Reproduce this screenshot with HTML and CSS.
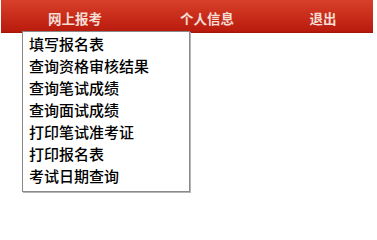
FILE: index.html
```html
<!DOCTYPE html>
<html lang="zh-CN">
<head>
<meta charset="utf-8">
<link rel="stylesheet" href="styles.css">
</head>
<body>
<div class="page">
  <nav class="navbar">
    <div class="nav-item nav-first">网上报考
      <ul class="dropdown">
        <li>填写报名表</li>
        <li>查询资格审核结果</li>
        <li>查询笔试成绩</li>
        <li>查询面试成绩</li>
        <li>打印笔试准考证</li>
        <li>打印报名表</li>
        <li>考试日期查询</li>
      </ul>
    </div>
    <div class="nav-item nav-second">个人信息</div>
    <div class="nav-item nav-third">退出</div>
  </nav>
</div>
</body>
</html>
```
FILE: styles.css
```css
html, body {
  margin: 0;
  padding: 0;
  background: #ffffff;
}
.page {
  width: 377px;
  height: 220px;
  position: relative;
  font-family: "Noto Sans CJK SC", "Noto Sans", sans-serif;
}
.navbar {
  display: flex;
  margin-left: 1px;
  width: 372px;
  height: 33px;
  padding-left: 8px;
  box-sizing: border-box;
  background: linear-gradient(to bottom, #d8402a 0%, #c82c1a 50%, #b91b0d 94%, #9e1208 100%);
}
.nav-item {
  height: 33px;
  line-height: 37px;
  text-align: center;
  color: #f6ddd4;
  font-size: 13.5px;
  font-weight: bold;
}
.nav-first {
  width: 132px;
  position: relative;
}
.nav-second {
  width: 132px;
}
.nav-third {
  width: 100px;
}
.dropdown {
  position: absolute;
  left: 13px;
  top: 31px;
  width: 168px;
  height: 161px;
  box-sizing: border-box;
  margin: 0;
  padding: 1px 0 0 6px;
  list-style: none;
  background: #ffffff;
  border: 1px solid #8a8a8a;
  box-shadow: 1px 1px 0 #b5b5b5;
  text-align: left;
  font-weight: normal;
  line-height: 22px;
  z-index: 2;
}
.dropdown li {
  height: 22px;
  line-height: 22px;
  font-size: 15px;
  font-weight: 500;
  color: #000000;
  white-space: nowrap;
}
```
